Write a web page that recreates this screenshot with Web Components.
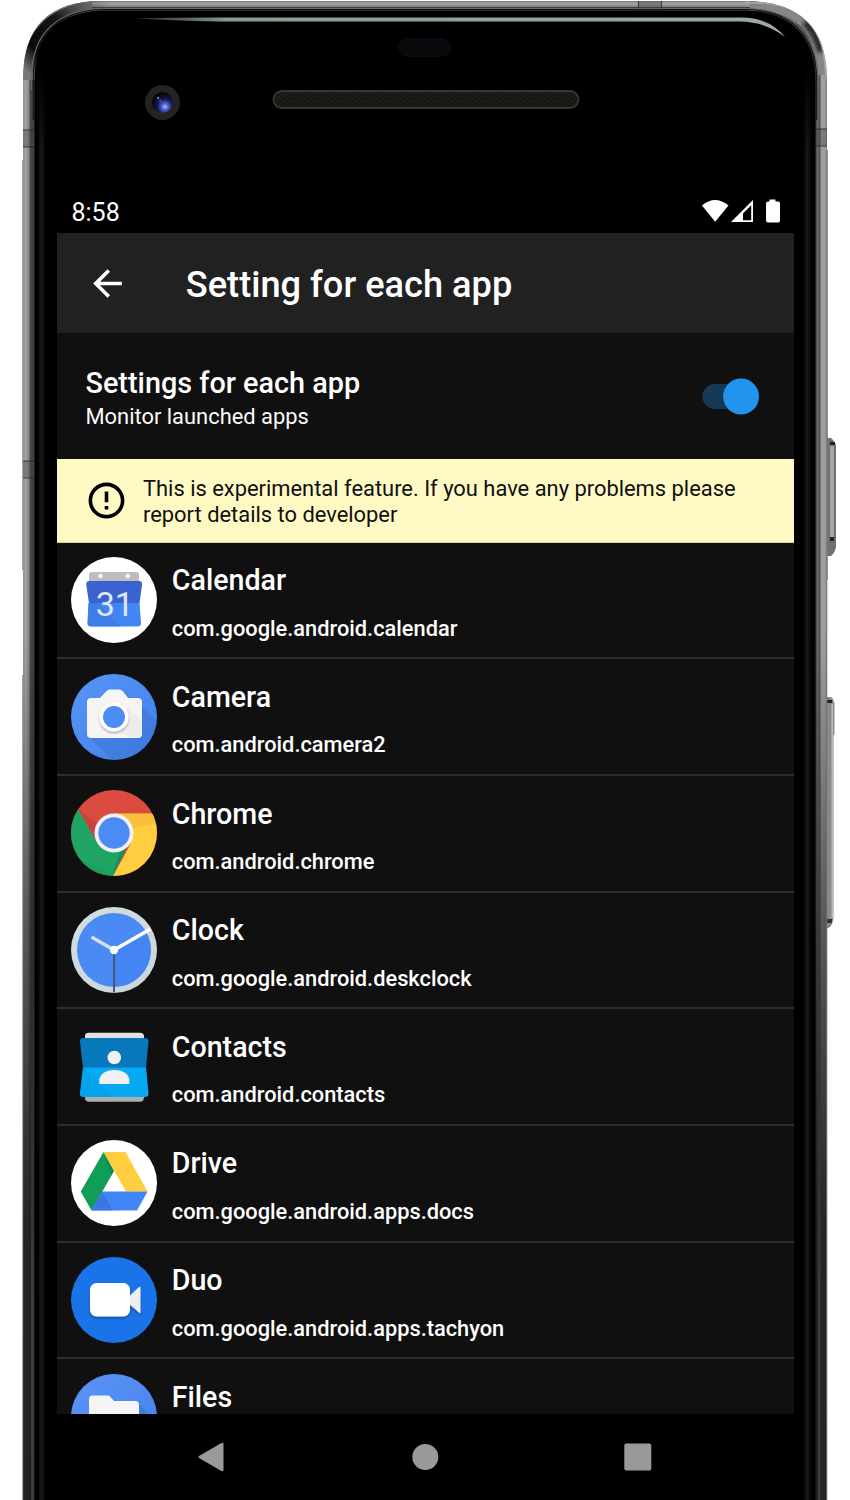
<!DOCTYPE html>
<html lang="en">
<head>
<meta charset="utf-8">
<title>Setting for each app</title>
<style>
body{margin:0;background:#fff;width:850px;height:1500px;overflow:hidden;font-family:Roboto,"Noto Sans",sans-serif;color:#fff}
</style>
</head>
<body>
<phone-frame>
  <status-bar></status-bar>
  <app-bar>Setting for each app</app-bar>
  <main-switch>Settings for each app<span slot="detail">Monitor launched apps</span></main-switch>
  <notice-banner>This is experimental feature. If you have any problems please report details to developer</notice-banner>
  <app-list>
    <app-row icon="calendar" package="com.google.android.calendar">Calendar</app-row>
    <app-row icon="camera" package="com.android.camera2">Camera</app-row>
    <app-row icon="chrome" package="com.android.chrome">Chrome</app-row>
    <app-row icon="clock" package="com.google.android.deskclock">Clock</app-row>
    <app-row icon="contacts" package="com.android.contacts">Contacts</app-row>
    <app-row icon="drive" package="com.google.android.apps.docs">Drive</app-row>
    <app-row icon="duo" package="com.google.android.apps.tachyon">Duo</app-row>
    <app-row icon="files" package="">Files</app-row>
  </app-list>
  <nav-bar></nav-bar>
</phone-frame>
<script>
const define = (name, html) => customElements.define(name, class extends HTMLElement {
  constructor(){ super(); this.attachShadow({mode:'open'}).innerHTML = typeof html === 'function' ? html(this) : html; }
});

define('phone-frame', `
<style>
:host{display:block;position:relative;width:850px;height:1500px}
svg.art{position:absolute;left:0;top:0;display:block}
.screen{position:relative;display:flex;flex-direction:column;margin-left:57px;width:737px;height:1500px;padding-top:190px;box-sizing:border-box}
</style>
<svg class="art" width="850" height="1500" viewBox="0 0 850 1500">
  <defs>
    <linearGradient id="fade" x1="0" y1="0" x2="0" y2="1500" gradientUnits="userSpaceOnUse">
      <stop offset=".42" stop-color="#1c1c1c" stop-opacity="0"/><stop offset=".6" stop-color="#1c1c1c" stop-opacity=".5"/><stop offset=".82" stop-color="#1c1c1c" stop-opacity=".93"/><stop offset="1" stop-color="#1c1c1c" stop-opacity=".95"/>
    </linearGradient>
    <linearGradient id="low" x1="0" y1="900" x2="0" y2="1300" gradientUnits="userSpaceOnUse"><stop offset="0" stop-color="#3d3d3d" stop-opacity="0"/><stop offset="1" stop-color="#3d3d3d"/></linearGradient>
    <linearGradient id="side" x1="23" x2="35" y1="0" y2="0" gradientUnits="userSpaceOnUse">
      <stop offset="0" stop-color="#929292"/><stop offset=".25" stop-color="#a4a4a4"/><stop offset=".5" stop-color="#848484"/><stop offset=".6" stop-color="#484848"/><stop offset="1" stop-color="#3a3a3a"/>
    </linearGradient>
    <linearGradient id="side2" x1="827" x2="815" y1="0" y2="0" gradientUnits="userSpaceOnUse">
      <stop offset="0" stop-color="#777"/><stop offset=".12" stop-color="#999"/><stop offset=".45" stop-color="#a2a2a2"/><stop offset=".6" stop-color="#555"/><stop offset=".8" stop-color="#686868"/><stop offset="1" stop-color="#333"/>
    </linearGradient>
    <linearGradient id="top" x1="0" x2="0" y1="1" y2="12" gradientUnits="userSpaceOnUse">
      <stop offset="0" stop-color="#777"/><stop offset=".2" stop-color="#a2a5a2"/><stop offset=".5" stop-color="#858885"/><stop offset=".56" stop-color="#333"/><stop offset=".75" stop-color="#777"/><stop offset="1" stop-color="#222"/>
    </linearGradient>
    <linearGradient id="glass"><stop offset="0" stop-color="#161616" stop-opacity="0"/><stop offset=".5" stop-color="#181818"/><stop offset="1" stop-color="#161616" stop-opacity="0"/></linearGradient>
    <linearGradient id="cover" x1="0" x2="0" y1="0" y2="1"><stop offset="0" stop-color="#000"/><stop offset="1" stop-color="#000" stop-opacity="0"/></linearGradient>
    <linearGradient id="shine"><stop offset="0" stop-color="#8f9c9d" stop-opacity=".2"/><stop offset=".15" stop-color="#89999b"/><stop offset="1" stop-color="#9ca7a8"/></linearGradient>
    <linearGradient id="corner" x1="30" y1="75" x2="115" y2="0" gradientUnits="userSpaceOnUse"><stop offset="0" stop-color="#0a0a0a" stop-opacity="0"/><stop offset=".18" stop-color="#0a0a0a"/><stop offset=".5" stop-color="#151515"/><stop offset=".95" stop-color="#555" stop-opacity="0"/></linearGradient>
    <radialGradient id="lens" cx=".62" cy=".7" r=".65"><stop offset="0" stop-color="#b0bdff"/><stop offset=".22" stop-color="#5267dd"/><stop offset=".55" stop-color="#151b4f"/><stop offset="1" stop-color="#05050b"/></radialGradient>
    <pattern id="mesh" width="3" height="4" patternUnits="userSpaceOnUse"><rect width="3" height="4" fill="#12110e"/><path d="M0 0h1.200v1.500H0zM1.500 2h1.200v1.500H1.500z" fill="#2f2c26"/></pattern>
    <clipPath id="body"><path d="M23 1500V78C23 26 51 1 100 1H745C799 1 827 27 827 80V1500Z"/></clipPath>
    <filter id="soft" x="-20%" y="-20%" width="140%" height="140%"><feGaussianBlur stdDeviation="2.200"/></filter>
  </defs>
  <!-- volume and power keys -->
  <g>
    <path d="M827 438h4q4 3 5 8v101q-1 6-5 9h-4z" fill="#707070"/><path d="M830 446h4v92h-4z" fill="#a6a6a6"/><path d="M830 442h5v3h-5zM830 537h4v4h-4z" fill="#222"/>
    <path d="M827 697h4q3 2 3.500 7v30l-1 2v182q-1 8-5 10h-2z" fill="#8a8a8a"/><path d="M831.500 704h1.500v214h-1.500z" fill="#bbb"/><path d="M827 700h5v3h-5z" fill="#222"/><path d="M827 919h5v4h-5z" fill="#333"/>
  </g>
  <g clip-path="url(#body)">
    <rect width="425" height="1500" fill="url(#side)"/><rect x="425" width="425" height="1500" fill="url(#side2)"/>
    <path d="M23 80C23 26 51 1 100 1H120V12H100L36 80Z" fill="#777"/>
    <rect x="92" width="658" height="12" fill="url(#top)"/>
    <path d="M28 82C28 32 54 6 116 6" fill="none" stroke="url(#corner)" stroke-width="13"/>
    <path d="M750 6.500H755C800 8 820 32 821 75" fill="none" stroke="#858585" stroke-width="8"/>
    <path d="M805 22Q817 34 821 52" fill="none" stroke="#222" stroke-width="7" filter="url(#soft)"/>
    <path d="M745 2.500H755C803 3 826 30 826 75" fill="none" stroke="#aaa" stroke-width="2"/>
    <rect x="23" y="600" width="12" height="900" fill="url(#fade)"/><rect x="815" y="600" width="12" height="900" fill="url(#fade)"/>
    <path d="M31 900h3v600h-3zM818 900h2.500v600h-2.500z" fill="url(#low)"/>
    <path d="M23 130h12v17H23zM815 129h12v17H815zM23 461h12v17H23zM638 1h24v11H638z" fill="#444" opacity=".4"/>
    <path d="M23 130h12M23 147h12M815 129h12M815 146h12M23 461h12M23 478h12M638.500 1v11M661.500 1v11" stroke="#222" opacity=".8"/>
  </g>
  <path d="M34.500 1500V78C34.500 33 62 11 104 10.500H745C790 11 815.500 37 815.500 80V1500Z" fill="#000"/>
  <path d="M31.500 90V78C31.500 31 60 9 104 8.500H747C792 9 818 35 818 80V90" fill="none" stroke="#666" stroke-width="1.200"/>
  <path d="M33.300 120V78C33.300 32 61 10 104 9.500H747C791 10 816.700 36 816.700 80V120" fill="none" stroke="#111" stroke-width="1"/>
  <path d="M22.700 160V570M22.700 675V1500" stroke="#929292"/>
  <path d="M827.300 150V580M826.800 580V1500" stroke="#777"/>
  <rect x="37" y="70" width="9" height="1430" fill="url(#glass)"/><rect x="803" y="70" width="9" height="1430" fill="url(#glass)"/>
  <path d="M36 68h11v80H36zM802 68h11v80H802z" fill="url(#cover)"/>
  <path d="M130 18.300Q170 17.500 220 17.500H742Q770 18 785 37Q766 22 740 21.500H220Q170 20.500 130 18.300Z" fill="url(#shine)"/>
  <rect x="398" y="38" width="53.500" height="19" rx="9.500" fill="#090a0e"/>
  <circle cx="162.500" cy="102.500" r="17.500" fill="#252221"/><circle cx="162.500" cy="102.500" r="10.500" fill="url(#lens)"/><circle cx="158" cy="98" r="1.200" fill="#6d78a7"/><circle cx="160.500" cy="101" r="1.700" fill="#35408a"/>
  <rect x="273.500" y="91" width="305" height="17" rx="8.500" fill="url(#mesh)" stroke="#363634" stroke-width="1.800"/>
</svg>
<div class="screen"><slot></slot></div>`);

define('status-bar', `
<style>
:host{display:flex;height:43px;align-items:center;justify-content:space-between;padding:0 14px 0 14.500px;box-sizing:border-box;font-size:25px;line-height:30px}
svg{display:block;margin-top:-1px}
span{padding-top:3px}
</style>
<span>8:58</span>
<svg width="80" height="26" viewBox="700 198 80 26" fill="#fff"><path d="M702 205.500Q715 194.500 728.500 205.500L715.200 221.700Z"/><path fill-rule="evenodd" d="M731 222L753 200V222ZM743 213.500V220.200H751.200V205.300Z"/><path d="M769.500 199.500h6v2h2.500q2 0 2 2v17q0 2-2 2h-10q-2 0-2-2v-17q0-2 2-2h1.500z"/></svg>`);

define('app-bar', `
<style>
:host{display:flex;height:100px;align-items:center;background:#212121;padding-left:28.500px;box-sizing:border-box;font-size:36.200px;font-weight:500;line-height:42px;flex:none}
svg{display:block;margin-right:57.300px}
span{padding-top:3px;white-space:nowrap}
</style>
<svg width="43" height="43" viewBox="0 0 24 24" fill="#fff"><path d="M20 11H7.830l5.590-5.590L12 4l-8 8 8 8 1.410-1.410L7.830 13H20v-2z"/></svg><span><slot></slot></span>`);

define('main-switch', `
<style>
:host{display:flex;height:126px;flex:none;background:#101010;box-sizing:border-box;padding:33px 35px 0 28.500px;justify-content:space-between}
.t{font-size:28.800px;line-height:34px;font-weight:500}
.d{font-size:21.900px;line-height:28px;margin-top:2.500px;color:#fbfbfb}
svg{display:block;margin-top:10px}
</style>
<div><div class="t"><slot></slot></div><div class="d"><slot name="detail"></slot></div></div>
<svg width="58" height="42" viewBox="0 0 58 42"><rect x="1.300" y="8" width="48" height="25" rx="12.500" fill="#163955"/><circle cx="40" cy="21" r="18.300" fill="#081018"/><circle cx="40" cy="20.500" r="18" fill="#2194ef"/></svg>`);

define('notice-banner', `
<style>
:host{display:flex;height:84px;flex:none;background:#fff9c4;color:#101010;box-sizing:border-box;border-bottom:1px solid #d9d4a6;padding:0 30px 0 28.300px;align-items:center;font-size:21.900px;line-height:25.800px}
svg{display:block;flex:none;margin-right:14.700px}
div{padding-top:2.600px}
</style>
<svg width="43" height="43" viewBox="0 0 24 24"><path d="M11 15h2v2h-2zm0-8h2v6h-2zm.99-5C6.470 2 2 6.480 2 12s4.470 10 9.990 10C17.520 22 22 17.520 22 12S17.520 2 11.990 2zM12 20c-4.420 0-8-3.580-8-8s3.580-8 8-8 8 3.580 8 8-3.580 8-8 8z"/></svg>
<div><slot></slot></div>`);

define('app-list', `<style>:host{display:block;height:871px;flex:none;overflow:hidden;background:#101010}div{margin-top:-.4px}</style><div><slot></slot></div>`);

const disc = (a, b) => `<defs><linearGradient id="g" x1="0" y1="0" x2="1" y2="1"><stop stop-color="${a}"/><stop offset="1" stop-color="${b}"/></linearGradient><clipPath id="c"><circle cx="43" cy="43" r="43"/></clipPath><filter id="s" x="-30%" y="-30%" width="160%" height="160%"><feDropShadow dx="0" dy="1.500" stdDeviation="1.300" flood-opacity=".35"/></filter></defs><circle cx="43" cy="43" r="43" fill="url(#g)"/>`;
const icons = {
calendar: disc('#fff','#fff') + `
  <path d="M18 24V18q0-3 3-3H65q3 0 3 3V24z" fill="#bdbdbd"/><circle cx="29.500" cy="19" r="2.300" fill="#f5f5f5"/><circle cx="56.700" cy="19" r="2.300" fill="#f5f5f5"/>
  <path d="M17.500 46H68.500L70 66Q70 69.500 66.500 69.500H20Q16.500 69.500 16.500 66Z" fill="#4285f4"/>
  <path d="M17.500 46H27L50 69.500H20Q16.500 69.500 16.500 66Z" fill="#3d78df" opacity=".6"/>
  <path d="M18 24H68Q71.500 24 71 28L68.500 46H18L15.300 28Q15 24 18 24Z" fill="#3a62d0"/>
  <text x="43.800" y="58.500" text-anchor="middle" font-size="34" font-weight="400" font-family="Roboto" fill="#dfe6f4">31</text>`,
camera: disc('#5795f6','#4180ec') + `
  <g clip-path="url(#c)"><path d="M57 18L87 48V87H43L17 62L70 61V31Z" fill="#3b71cc" opacity=".45"/></g>
  <path d="M20 24h9l6-6.500Q36.500 15.500 39 15.500H48Q50.500 15.500 52 17.500L57 24H67Q71 24 71 28V60Q71 64 67 64H20Q16 64 16 60V28Q16 24 20 24Z" fill="#f5f5f5"/>
  <path d="M57 33L71 47V60Q71 64 67 64H60L44 55Z" fill="#e2e2e2" opacity=".45"/>
  <circle cx="43" cy="43" r="14.500" fill="#fff" filter="url(#s)"/><circle cx="43" cy="43" r="11" fill="#4c8cf5"/>`,
chrome: disc('#db4b3f','#db4b3f') + `
  <g clip-path="url(#c)"><path d="M7.500 20L24.500 49.500 43 62 56 56 40.500 90H-5V20Z" fill="#1fa463"/><path d="M0 65L42 86 43 90H0Z" fill="#169b58" opacity=".5"/>
  <path d="M43 23.500H90V90H40L60 53Z" fill="#ffcd40"/><path d="M43 23.500H86L87 33 60 39Z" fill="#e7ad30" opacity=".35"/>
  <path d="M7.500 20L24.500 49.500 29 35Z" fill="#9d352d" opacity=".3"/><path d="M57 57L40.500 86 49 62Z" fill="#087846" opacity=".45"/></g>
  <circle cx="43" cy="43" r="19.500" fill="#f1f1f1"/><circle cx="43" cy="43" r="15.700" fill="#4c8bf5"/>`,
clock: disc('#d4dde0','#cad6da') + `
  <circle cx="43" cy="43" r="37" fill="#4a8af4"/><path d="M43 43L43 80A37 37 0 0 0 77 29Z" fill="#4081f3" opacity=".55"/>
  <path d="M43 43L20.500 30" stroke="#d9e0e6" stroke-width="3.300"/><path d="M43 43L79.500 22" stroke="#fff" stroke-width="3.500"/><path d="M43 43V85.500" stroke="#47566f" stroke-width="1.900"/><circle cx="43" cy="43" r="4.200" fill="#fff"/>`,
contacts: `
  <path d="M14 20V12Q14 8.700 18 8.700H69Q72.500 8.700 73 12V20Z" fill="#e1e1e1"/><path d="M14 66V74Q14 77.700 18 77.700H69Q72.500 77.700 73 74V66Z" fill="#adadad"/>
  <path d="M12 43H75L77.500 69Q78 73 74 73H12.500Q8.500 73 9 69Z" fill="#06a9f4"/><path d="M12 43L42 73H12.500Q8.500 73 9 69Z" fill="#0398dc" opacity=".35"/>
  <path d="M12.500 14H74Q78 14 77.500 18L75 43.500H12L9 18Q8.500 14 12.500 14Z" fill="#0878bc"/>
  <circle cx="43.300" cy="33.500" r="6.800" fill="#f1f1f1"/><path d="M28.300 60V55C30 49 36 46 43.300 46S57 49 58.300 55V60Z" fill="#f1f1f1"/>`,
drive: disc('#fff','#fff') + `
  <path d="M32.500 12L43 31 20.500 70.500 9.800 51.500Z" fill="#0f9d58"/><path d="M32.500 12H54.500L76.500 51.500H55Z" fill="#ffcd40"/><path d="M31 51.500H76.500L66 70.500H20.500Z" fill="#4285f4"/><path d="M31 51.500L42 70.500H20.500Z" fill="#326bd0" opacity=".55"/><path d="M32.500 12L43 31 40 36Z" fill="#0b8048" opacity=".5"/>`,
duo: disc('#1a73e8','#1a73e8') + `
  <g filter="url(#s)"><path d="M58 39.500L68 30Q69.500 29 69.500 31V55Q69.500 57 68 55.500L58 47Z" fill="#eceff1"/><rect x="19" y="26" width="40" height="33.500" rx="6.500" fill="#fff"/></g>`,
files: disc('#5c95f7','#4180ec') + `
  <g clip-path="url(#c)"><path d="M67 29L90 52V86H40Z" fill="#3b71cc" opacity=".55"/></g><path d="M18 60V25Q18 21.500 21.500 21.500H38L43 27H64Q68 27 68 31V60Z" fill="#f5f5f5"/>`
};

define('app-row', el => `
<style>
:host{display:flex;height:116.670px;box-sizing:border-box;border-bottom:2px solid #2d2d2d;padding:14.400px 14.300px 0;gap:14.500px;font-weight:500}
svg{display:block;flex:none}
.x{padding-top:6.200px}
.n{font-size:28.600px;line-height:34px}
.p{font-size:21.800px;line-height:28px;margin-top:17.600px}
</style>
<svg width="86" height="86" viewBox="0 0 86 86">${icons[el.getAttribute('icon')]}</svg>
<div class="x"><div class="n"><slot></slot></div><div class="p">${el.getAttribute('package')}</div></div>`);

define('nav-bar', `
<style>:host{display:flex;flex:1;align-items:center;justify-content:space-between;padding:0 142px 0 140px;background:#000}svg{display:block}</style>
<svg width="28" height="30" viewBox="0 0 28 30" fill="#999"><path d="M2 14Q.8 15 2 16L24 28.800Q26.500 30 26.500 28V2Q26.500 0 24 1.200Z"/></svg>
<svg width="28" height="28" viewBox="0 0 28 28" fill="#999"><circle cx="14.300" cy="14" r="13"/></svg>
<svg width="28" height="28" viewBox="0 0 28 28" fill="#999"><rect x=".3" y=".5" width="27" height="27" rx="2"/></svg>`);
</script>
</body>
</html>
